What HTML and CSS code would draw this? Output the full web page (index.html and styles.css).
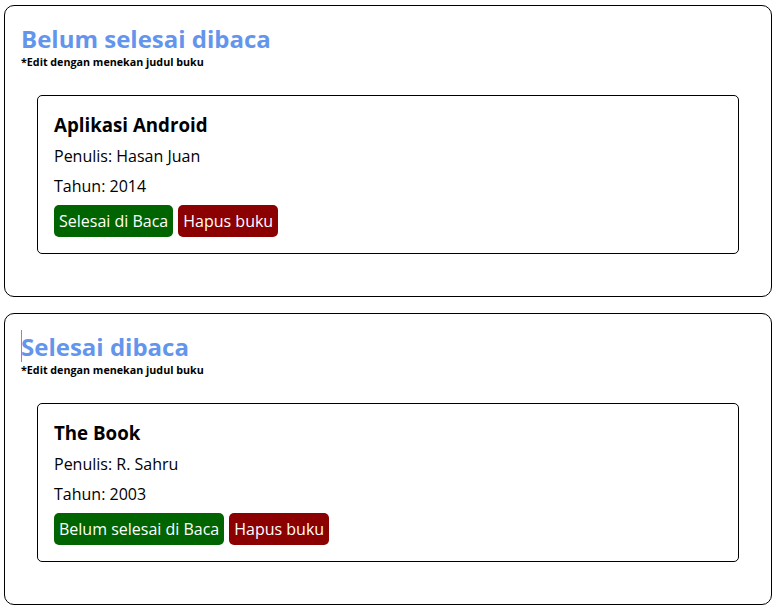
FILE: index.html
```html
<!DOCTYPE html>
<html lang="id">
<head>
<meta charset="utf-8">
<title>Bookshelf</title>
<link rel="stylesheet" href="styles.css">
</head>
<body>
<main class="shelves">
  <section class="book_shelf">
    <h2>Belum selesai dibaca</h2>
    <h6 class="hint">*Edit dengan menekan judul buku</h6>
    <div class="book_list">
      <article class="book_item">
        <h3>Aplikasi Android</h3>
        <p>Penulis: Hasan Juan</p>
        <p>Tahun: 2014</p>
        <div class="action">
          <button class="green">Selesai di Baca</button><button class="red">Hapus buku</button>
        </div>
      </article>
    </div>
  </section>
  <section class="book_shelf">
    <h2><span class="caret"></span>Selesai dibaca</h2>
    <h6 class="hint">*Edit dengan menekan judul buku</h6>
    <div class="book_list">
      <article class="book_item">
        <h3>The Book</h3>
        <p>Penulis: R. Sahru</p>
        <p>Tahun: 2003</p>
        <div class="action">
          <button class="green">Belum selesai di Baca</button><button class="red">Hapus buku</button>
        </div>
      </article>
    </div>
  </section>
</main>
</body>
</html>
```
FILE: styles.css
```css
* {
  margin: 0;
  padding: 0;
  box-sizing: border-box;
  font-family: "Open Sans", "Liberation Sans", sans-serif;
}

body {
  background: #fff;
  color: #000;
}

.shelves {
  padding: 5px 4px 0 4px;
}

.book_shelf {
  border: 1px solid #000;
  border-radius: 10px;
  padding: 16px;
  margin-bottom: 16px;
}

.book_shelf > h2 {
  color: cornflowerblue;
  font-size: 24px;
  font-weight: 700;
  line-height: normal;
}

.caret {
  display: inline-block;
  width: 1px;
  height: 32px;
  margin-right: -1px;
  background: cornflowerblue;
  vertical-align: top;
}

.hint {
  font-size: 10.72px;
  font-weight: 700;
  line-height: normal;
}

.book_list {
  padding: 16px;
}

.book_item {
  border: 1px solid #000;
  border-radius: 5px;
  padding: 8px 16px 16px 16px;
  margin: 10px 0;
}

.book_item h3 {
  font-size: 18.72px;
  font-weight: 700;
  line-height: normal;
  margin: 8px 0;
}

.book_item p {
  font-size: 16px;
  line-height: normal;
  margin: 8px 0;
}

.action {
  display: flex;
}

.action button {
  border: 0;
  padding: 5px;
  margin-right: 5px;
  border-radius: 5px;
  font-size: 16px;
  line-height: normal;
  color: #fff;
}

.green {
  background-color: darkgreen;
}

.red {
  background-color: darkred;
}
```
